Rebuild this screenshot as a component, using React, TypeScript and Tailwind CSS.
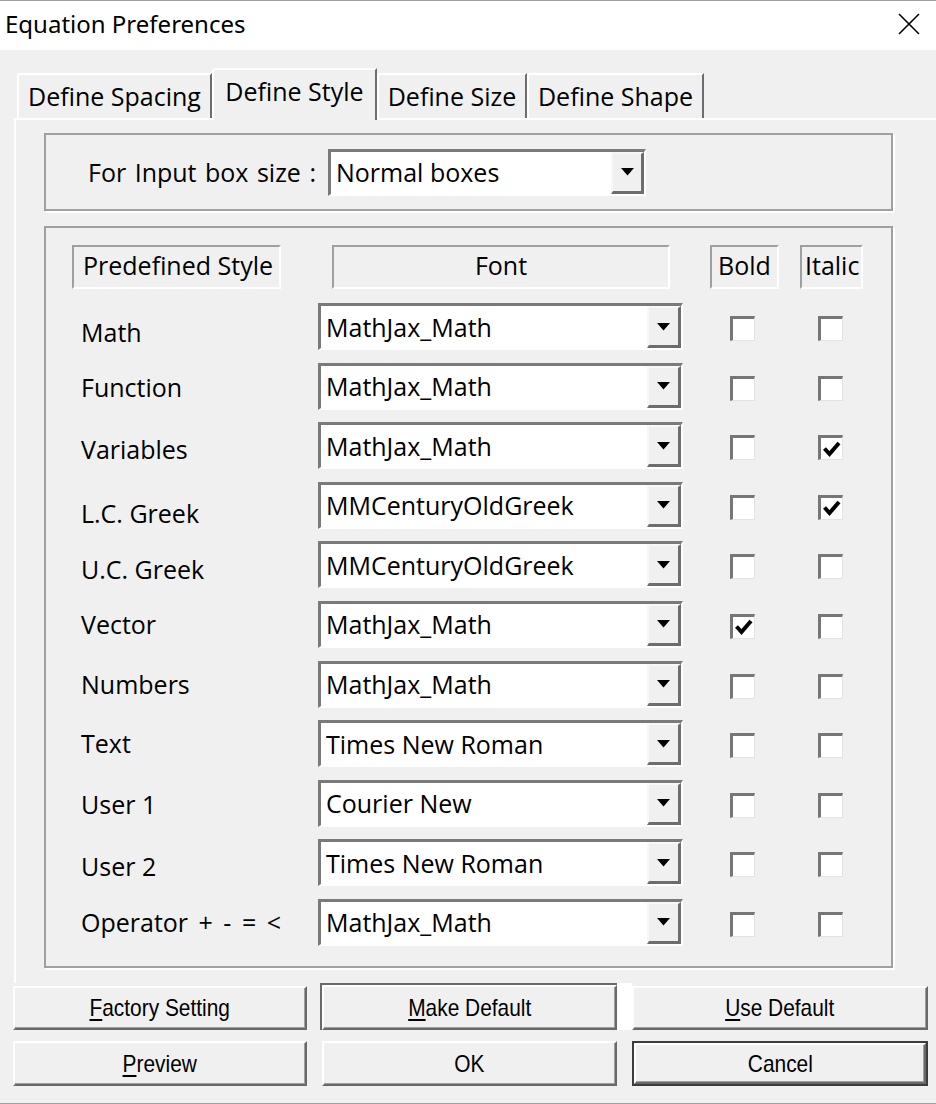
import { ReactNode } from "react";

type Row = {
  label: string;
  font: string;
  bold?: boolean;
  italic?: boolean;
  shift?: string;
};

const rows: Row[] = [
  { label: "Math", font: "MathJax_Math", shift: "translate-y-[6px]" },
  { label: "Function", font: "MathJax_Math", shift: "translate-y-[1px]" },
  { label: "Variables", font: "MathJax_Math", italic: true, shift: "translate-y-[4px]" },
  { label: "L.C. Greek", font: "MMCenturyOldGreek", italic: true, shift: "translate-y-[8px]" },
  { label: "U.C. Greek", font: "MMCenturyOldGreek", shift: "translate-y-[5px]" },
  { label: "Vector", font: "MathJax_Math", bold: true },
  { label: "Numbers", font: "MathJax_Math" },
  { label: "Text", font: "Times New Roman" },
  { label: "User 1", font: "Courier New", shift: "translate-y-[1px]" },
  { label: "User 2", font: "Times New Roman", shift: "translate-y-[4px]" },
  { label: "Operator + - = <", font: "MathJax_Math", shift: "[word-spacing:4px]" },
];

const raised =
  "flex items-center justify-center bg-[#f0f0f0] border-2 border-t-white border-l-white border-b-[#696969] border-r-[#696969] shadow-[inset_-1px_-1px_0_#a0a0a0]";

function ArrowButton({ className }: { className: string }) {
  return (
    <div
      className={
        "flex items-center justify-center bg-[#f0f0f0] border-t-2 border-l-2 border-t-[#f8f8f8] border-l-[#f8f8f8] border-b-[3px] border-r-[3px] border-b-[#6d6d6d] border-r-[#6d6d6d] " +
        className
      }
    >
      <svg width="13" height="8" viewBox="0 0 13 8">
        <path d="M0 0 H13 L6.5 7.5 Z" fill="#000" />
      </svg>
    </div>
  );
}

function Combo({ value, width }: { value: string; width: string }) {
  return (
    <div
      className={
        "flex h-[47px] bg-white border-t-[3px] border-l-[3px] border-t-[#7a7a7a] border-l-[#7a7a7a] border-b-2 border-r-2 border-b-white border-r-white " +
        width
      }
    >
      <div className="flex-1 flex items-center pl-[5px] text-[25px] leading-none whitespace-nowrap">{value}</div>
      <ArrowButton className="w-[34px]" />
    </div>
  );
}

function Check({ checked }: { checked?: boolean }) {
  return (
    <div className="w-[25px] h-[25px] translate-y-[2px] bg-white border-t-[3px] border-l-[3px] border-t-[#767676] border-l-[#767676] border-b border-r border-b-[#e3e3e3] border-r-[#e3e3e3] flex items-center justify-center">
      {checked ? (
        <svg width="20" height="20" viewBox="0 0 20 20">
          <path d="M2.5 9.5 L7.5 15 L17 4" fill="none" stroke="#000" strokeWidth="4" strokeLinejoin="miter" />
        </svg>
      ) : null}
    </div>
  );
}

function HeaderCell({ children, className }: { children: ReactNode; className: string }) {
  return (
    <div
      className={
        "h-[44px] flex items-center border-t-2 border-l-2 border-t-[#a0a0a0] border-l-[#a0a0a0] border-b-2 border-r-2 border-b-white border-r-white text-[25px] leading-none pb-[4px] whitespace-nowrap " +
        className
      }
    >
      {children}
    </div>
  );
}

function BtnText({ children }: { children: ReactNode }) {
  return (
    <span className="inline-block font-['Liberation_Sans',Arial,sans-serif] text-[24px] leading-none scale-x-[0.87] whitespace-nowrap">
      {children}
    </span>
  );
}

function Tab({ label, width, active }: { label: string; width: string; active?: boolean }) {
  return (
    <div
      className={
        "flex items-center justify-center text-[25px] leading-none whitespace-nowrap bg-[#f0f0f0] border-t-2 border-l-2 border-t-white border-l-white border-r-2 border-r-[#6d6d6d] rounded-tl-[3px] " +
        width +
        (active ? " h-[52px] -mb-[2px] pb-[8px]" : " h-[45px] pb-[1px]")
      }
    >
      {label}
    </div>
  );
}

export default function App() {
  return (
    <div className="w-[936px] h-[1104px] overflow-hidden bg-[#f0f0f0] border-t border-b border-[#a0a0a0] flex flex-col font-['Open_Sans',sans-serif] text-black">
      <div className="h-[49px] shrink-0 bg-white flex items-center justify-between pl-[5px] pr-[15px]">
        <span className="font-['Noto_Sans',sans-serif] text-[24px] leading-none -mt-[4px]">Equation Preferences</span>
        <svg width="24" height="24" viewBox="0 0 24 24" className="-mt-[3px]">
          <path d="M2 2 L22 22 M22 2 L2 22" stroke="#000" strokeWidth="1.6" fill="none" />
        </svg>
      </div>

      <div className="relative z-10 shrink-0 h-[68px] pt-[18px] pl-[17px] flex items-end">
        <Tab label="Define Spacing" width="w-[195px]" />
        <Tab label="Define Style" width="w-[165px]" active />
        <Tab label="Define Size" width="w-[150px]" />
        <Tab label="Define Shape" width="w-[177px]" />
      </div>

      <div className="shrink-0 ml-[14px] w-[930px] h-[865px] border-t-2 border-l-2 border-white pt-[13px] pl-[28px]">
        <div className="w-[849px] h-[78px] border-2 border-[#a0a0a0] shadow-[2px_2px_0_#fff] flex items-center pl-[42px]">
          <span className="w-[240px] text-[25px] leading-none whitespace-nowrap [word-spacing:2px]">For Input box size :</span>
          <div className="flex h-[47px] w-[318px] bg-white border-t-[3px] border-l-[3px] border-t-[#7a7a7a] border-l-[#7a7a7a] border-b-2 border-r-2 border-b-white border-r-white">
            <div className="flex-1 flex items-center pl-[5px] text-[25px] leading-none">Normal boxes</div>
            <ArrowButton className="w-[33px]" />
          </div>
        </div>

        <div className="mt-[15px] w-[849px] h-[742px] border-2 border-[#a0a0a0] shadow-[2px_2px_0_#fff] pt-[17px] pl-[26px]">
          <div className="flex h-[44px]">
            <HeaderCell className="w-[209px] pl-[9px]">Predefined Style</HeaderCell>
            <HeaderCell className="ml-[51px] w-[338px] justify-center">Font</HeaderCell>
            <HeaderCell className="ml-[40px] w-[69px] pl-[6px]">Bold</HeaderCell>
            <HeaderCell className="ml-[21px] w-[63px] pl-[3px]">Italic</HeaderCell>
          </div>

          <div className="mt-[14px] flex flex-col gap-[12.6px]">
            {rows.map((r) => (
              <div key={r.label} className="flex items-center h-[47px]">
                <span className={"w-[246px] pl-[9px] text-[25px] leading-none whitespace-nowrap " + (r.shift ?? "")}>
                  {r.label}
                </span>
                <Combo value={r.font} width="w-[365px]" />
                <div className="ml-[47px]">
                  <Check checked={r.bold} />
                </div>
                <div className="ml-[63px]">
                  <Check checked={r.italic} />
                </div>
              </div>
            ))}
          </div>
        </div>
      </div>

      <div className="shrink-0 h-[47px] flex items-end pl-[13px]">
        <div className={raised + " w-[294px] h-[44px]"}>
          <BtnText>
            <u className="underline-offset-[3px]">F</u>actory Setting
          </BtnText>
        </div>
        <div className="ml-[13px] w-[297px] h-[47px] border-t-2 border-l-2 border-[#696969] flex">
          <div className={raised + " flex-1"}>
            <BtnText>
              <u className="underline-offset-[3px]">M</u>ake Default
            </BtnText>
          </div>
        </div>
        <div className="w-[15px] h-[47px] bg-white" />
        <div className={raised + " w-[296px] h-[44px]"}>
          <BtnText>
            <u className="underline-offset-[3px]">U</u>se Default
          </BtnText>
        </div>
      </div>

      <div className="shrink-0 mt-[11px] h-[45px] flex pl-[13px]">
        <div className={raised + " w-[294px] h-full"}>
          <BtnText>
            <u className="underline-offset-[3px]">P</u>review
          </BtnText>
        </div>
        <div className={raised + " ml-[15px] w-[295px] h-full"}>
          <BtnText>OK</BtnText>
        </div>
        <div className="ml-[15px] w-[296px] h-full border-2 border-[#3c3c3c] flex">
          <div className={raised + " flex-1"}>
            <BtnText>Cancel</BtnText>
          </div>
        </div>
      </div>
    </div>
  );
}
